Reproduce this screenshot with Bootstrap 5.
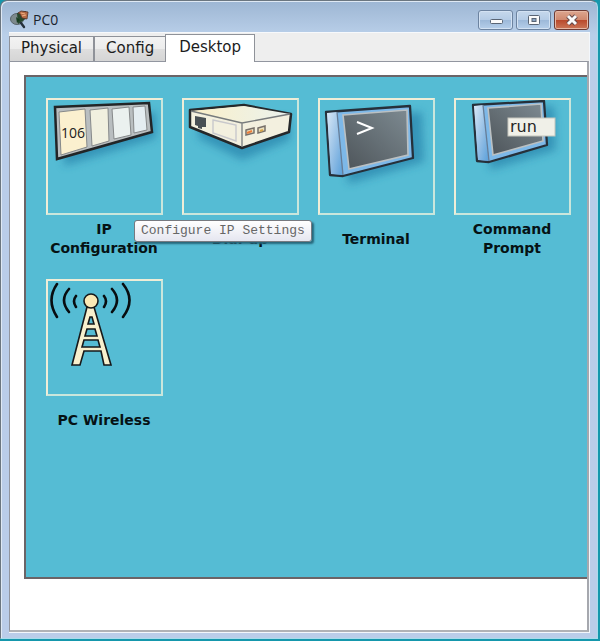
<!DOCTYPE html>
<html lang="en">
<head>
<meta charset="utf-8">
<meta name="viewport" content="width=device-width, initial-scale=1">
<title>PC0</title>
<link href="https://cdn.jsdelivr.net/npm/bootstrap@5.3.0/dist/css/bootstrap.min.css" rel="stylesheet">
<style>
body { background: #1597ac; font-family: "DejaVu Sans", Verdana, sans-serif; color: #1c1c1c; }
.desk { padding: 0 2px 2px 0; }
.win { background: linear-gradient(#9db6d3 0, #b9cfe9 34px, #b9cde9 100px, #bacde9 100%); border: 1px solid #6b7680; border-right-color: #a9dcec; border-bottom-color: #a9dcec; border-radius: 7px 7px 0 0; box-shadow: inset 1px 1px 0 #dfe9f4; padding: 0 7px 5px 8px; }
.title-bar { height: 31px; padding: 6px 1px 0 1px; gap: 3px; }
.title-text { font: 14px/26px "Open Sans", sans-serif; color: #1a222c; }
.cap-group { gap: 3px; padding-top: 3px; }
.cap-btn { width: 35px; height: 20px; border: 1px solid #6c83a0; border-radius: 3px; background: linear-gradient(#c6d8ec 0, #b5cce6 48%, #9db9d9 52%, #b6cfea 100%); box-shadow: inset 0 0 0 1px #d3e2f3; }
.cap-close { border-color: #6d3b34; background: linear-gradient(#dda68f 0, #d0896f 48%, #b9492c 52%, #cb7658 100%); box-shadow: inset 0 0 0 1px #e5b7a4; }
.client { border-top: 1px solid #f7f9fc; border-right: 1px solid #f3f7fc; border-bottom: 1px solid #f3f7fc; background: #eee; }
.tab-strip { height: 28px; }
.tab-btn { font-size: 15px; line-height: 20px; border: 1px solid #8f9299; border-bottom: 0; border-radius: 0; background: linear-gradient(#f3f3f3 0, #ececec 48%, #dedede 52%, #d5d5d5 100%); color: #1c1c1c; height: 25px; padding: 1px 11px 3px; }
.tab-btn.active { background: #fff; height: 28px; margin: 0 0 -1px -1px; padding: 2px 13px 5px; position: relative; }
.pane { background: #fff; border: 1px solid #9296a0; border-right: 2px solid #a6a8ae; border-bottom: 2px solid #b0b2b6; padding: 13px 0 51px 14px; }
.apps { background: #55bcd4; border: solid #6b6467; border-width: 2px 0 2px 2px; padding: 21px 0 0 10px; }
.app { width: 136px; height: 181px; padding: 0 0 21px; color: #061214; font-size: 14px; line-height: 19px; font-weight: 700; }
.tile { width: 117px; height: 117px; border: 2px solid #efedd7; border-right-color: #cae6dc; border-bottom-color: #cae6dc; margin-bottom: 5px; }
.tile svg { display: block; }
.caption { height: 38px; width: 117px; }
.tip { left: 98px; top: 122px; border: 1px solid #777a80; border-radius: 3px; background: linear-gradient(#fff, #e5e6f0); color: #666; font: 13px/18px "Liberation Mono", "Courier New", monospace; padding: 1px 6px; box-shadow: 2px 2px 2px #27677b; }
</style>
<script src="https://cdn.jsdelivr.net/npm/bootstrap@5.3.0/dist/js/bootstrap.bundle.min.js"></script>
</head>
<body>
<div class="desk min-vh-100 d-flex">
<main class="win flex-grow-1 d-flex flex-column">
  <header class="title-bar d-flex align-items-start">
    <svg width="20" height="24" viewBox="0 0 20 24" aria-hidden="true">
      <ellipse cx="7" cy="12" rx="6.5" ry="5.5" fill="#7d8a8d" stroke="#59656b"/>
      <path d="M7 6l9-2 1 7-9 6z" fill="#27482e"/>
      <path d="M8 6l3-2 7 1-1 7-5-1-2-4z" fill="#b66b46" stroke="#543428" stroke-width=".8"/>
      <path d="M11 6l4 1M12 9l4-1" stroke="#efb083"/>
      <path d="M6 10l4 3-3 3z" fill="#173d20"/>
      <path d="M11 16l3 4" stroke="#26313b" stroke-width="2.4" stroke-linecap="round"/>
    </svg>
    <h1 class="title-text m-0 flex-grow-1">PC0</h1>
    <div class="cap-group d-flex">
      <button class="cap-btn p-0 d-flex align-items-center justify-content-center" type="button" aria-label="Minimize"><svg width="14" height="12"><rect x="1.5" y="5.5" width="12" height="4" rx="1" fill="#fafafa" stroke="#596474"/></svg></button>
      <button class="cap-btn p-0 d-flex align-items-center justify-content-center" type="button" aria-label="Maximize"><svg width="14" height="12"><rect x="1.5" y="1.5" width="11" height="9" rx="1" fill="#fafafa" stroke="#596474"/><rect x="5" y="4.5" width="4" height="3" fill="#8ba6c5" stroke="#596474"/></svg></button>
      <button class="cap-btn cap-close p-0 d-flex align-items-center justify-content-center" type="button" aria-label="Close"><svg width="14" height="12" fill="none"><path d="M3 2l8 8m0-8l-8 8" stroke="#65494a" stroke-width="5"/><path d="M3 2l8 8m0-8l-8 8" stroke="#fafafa" stroke-width="3"/></svg></button>
    </div>
  </header>
  <div class="client flex-grow-1 d-flex flex-column">
    <div class="tab-strip d-flex align-items-end" role="tablist">
      <button class="tab-btn" type="button" role="tab" aria-selected="false">Physical</button>
      <button class="tab-btn" type="button" role="tab" aria-selected="false">Config</button>
      <button class="tab-btn active" type="button" role="tab" aria-selected="true">Desktop</button>
    </div>
    <section class="pane flex-grow-1 d-flex flex-column" role="tabpanel" aria-label="Desktop">
      <div class="apps flex-grow-1 d-flex flex-wrap align-content-start">
        <div class="position-relative">
          <button type="button" class="app border-0 bg-transparent d-flex flex-column align-items-center" aria-describedby="ip-tip">
            <span class="tile"><svg width="113" height="113" viewBox="0 0 113 113">
              <defs>
                <filter id="soft" x="-20%" y="-20%" width="140%" height="150%"><feGaussianBlur stdDeviation="4"/></filter>
                <linearGradient id="cream"><stop stop-color="#fbefc8"/><stop offset="1" stop-color="#eaf2ee"/></linearGradient>
                <linearGradient id="screen" x1="0" y1="1" x2="1" y2="0"><stop stop-color="#4d5459"/><stop offset="1" stop-color="#7d8a91"/></linearGradient>
                <linearGradient id="side" x1="0" y1="0" x2="1" y2="1"><stop stop-color="#d9e8f6"/><stop offset=".6" stop-color="#8dbbe4"/><stop offset="1" stop-color="#589fda"/></linearGradient>
              </defs>
              <path d="M16 14L108 12V38L16 66Z" fill="#2b87ae" opacity=".75" filter="url(#soft)"/>
              <path d="M7 7L101 3L104 32L9 59Z" fill="#b9bec0" stroke="#222527" stroke-width="2.5"/>
              <path d="M11 12L37 9L39 47L13 55Z" fill="#fbf0cf" stroke="#86898a"/>
              <path d="M42 10L60 8L61 41L44 46Z" fill="#f1f0df" stroke="#86898a"/>
              <path d="M64 9L81 7L83 35L66 39Z" fill="#ebf1ef" stroke="#86898a"/>
              <path d="M85 7L97 6L99 30L86 33Z" fill="#e4edf1" stroke="#86898a"/>
              <text x="13" y="38" font-family="Open Sans" font-weight="400" font-size="14" fill="#202020">106</text>
            </svg></span>
            <span class="caption d-flex align-items-center justify-content-center">IP<br>Configuration</span>
          </button>
          <div class="tip position-absolute text-nowrap z-3" id="ip-tip" role="tooltip">Configure IP Settings</div>
        </div>
        <button type="button" class="app border-0 bg-transparent d-flex flex-column align-items-center">
          <span class="tile"><svg width="113" height="113" viewBox="0 0 113 113">
            <path d="M16 20L106 18V40L58 60L14 38Z" fill="#2b87ae" opacity=".75" filter="url(#soft)"/>
            <path d="M6 10L60 5L107 14L105 32L58 48L6 27Z" fill="#f3f0df" stroke="#25282a" stroke-width="2.5" stroke-linejoin="round"/>
            <path d="M7 11L60 6L106 14L58 23Z" fill="url(#cream)"/>
            <path d="M7 11L58 23L106 14M58 23V47" fill="none" stroke="#777b7d" stroke-width="1.3"/>
            <path d="M11 16L22 18V27H18V29L14 28V26L11 25Z" fill="#485055"/>
            <path d="M29 20L52 25V41L29 33Z" fill="none" stroke="#c8c8cc" stroke-width="1.4"/>
            <path d="M62 30L70 28V33L62 35ZM74 28L81 26V31L74 33Z" fill="#ece1bf" stroke="#77706a" stroke-width="1.5"/>
            <path d="M63 33L68 31" stroke="#ec7d3b" stroke-width="2"/><path d="M76 31l3-1" stroke="#d9a64a" stroke-width="2"/>
          </svg></span>
          <span class="caption d-flex align-items-center justify-content-center">Dial-up</span>
        </button>
        <button type="button" class="app border-0 bg-transparent d-flex flex-column align-items-center">
          <span class="tile"><svg width="113" height="113" viewBox="0 0 113 113">
            <path d="M20 16L102 12L104 62L28 84Z" fill="#2b87ae" opacity=".75" filter="url(#soft)"/>
            <path d="M6 12L90 6L93 58L23 76L10 75Z" fill="#7db8e8" stroke="#26303a" stroke-width="2.3" stroke-linejoin="round"/>
            <path d="M7 13L17 12L23 75L11 74Z" fill="url(#side)"/>
            <path d="M17 12L23 75" stroke="#667d97" stroke-width="1.3"/>
            <path d="M23 15L87 10L88 55L29 69Z" fill="url(#screen)" stroke="#bbc0c2" stroke-width="1.6"/>
            <path d="M37 22L52 28L37 34" fill="none" stroke="#fff" stroke-width="2"/>
          </svg></span>
          <span class="caption d-flex align-items-center justify-content-center">Terminal</span>
        </button>
        <button type="button" class="app border-0 bg-transparent d-flex flex-column align-items-center">
          <span class="tile"><svg width="113" height="113" viewBox="0 0 113 113">
            <path d="M28 8L98 6L100 50L34 70Z" fill="#2b87ae" opacity=".75" filter="url(#soft)"/>
            <path d="M17 5L88 1L91 45L33 62L21 61Z" fill="#7db8e8" stroke="#26303a" stroke-width="2.3" stroke-linejoin="round"/>
            <path d="M18 6L27 5L33 61L22 60Z" fill="url(#side)"/>
            <path d="M27 5L33 61" stroke="#667d97" stroke-width="1.3"/>
            <path d="M32 8L85 4L87 41L37 55Z" fill="url(#screen)" stroke="#bbc0c2" stroke-width="1.6"/>
            <rect x="52" y="18" width="47" height="18" fill="#f0f0e8" stroke="#c5c6bd"/>
            <text x="54" y="32" font-family="DejaVu Sans" font-weight="400" font-size="16" fill="#262626">run</text>
          </svg></span>
          <span class="caption d-flex align-items-center justify-content-center">Command<br>Prompt</span>
        </button>
        <button type="button" class="app border-0 bg-transparent d-flex flex-column align-items-center">
          <span class="tile"><svg width="113" height="113" viewBox="0 0 113 113">
            <g fill="none" stroke="#080d10" stroke-width="2.6" stroke-linecap="round">
              <path d="M9 3Q-2 19 9 36M21 8Q11 19 21 31M28 15Q24 20 28 26M56 15Q60 20 56 26M64 8Q74 19 64 31M75 3Q88 19 75 36"/>
            </g>
            <path fill-rule="evenodd" d="M39 26L24 84H32L36 70H53L56 84H63L46 26ZM42 36L40 43H46L44 36ZM39 48L37 55H49L47 48ZM36 59L34 66H52L50 59Z" fill="#f8f0cd" stroke="#17191a" stroke-width="1.6"/>
            <circle cx="43" cy="20" r="7" fill="#fbe9b5" stroke="#17191a" stroke-width="1.6"/>
          </svg></span>
          <span class="caption d-flex align-items-center justify-content-center">PC Wireless</span>
        </button>
      </div>
    </section>
  </div>
</main>
</div>
</body>
</html>
